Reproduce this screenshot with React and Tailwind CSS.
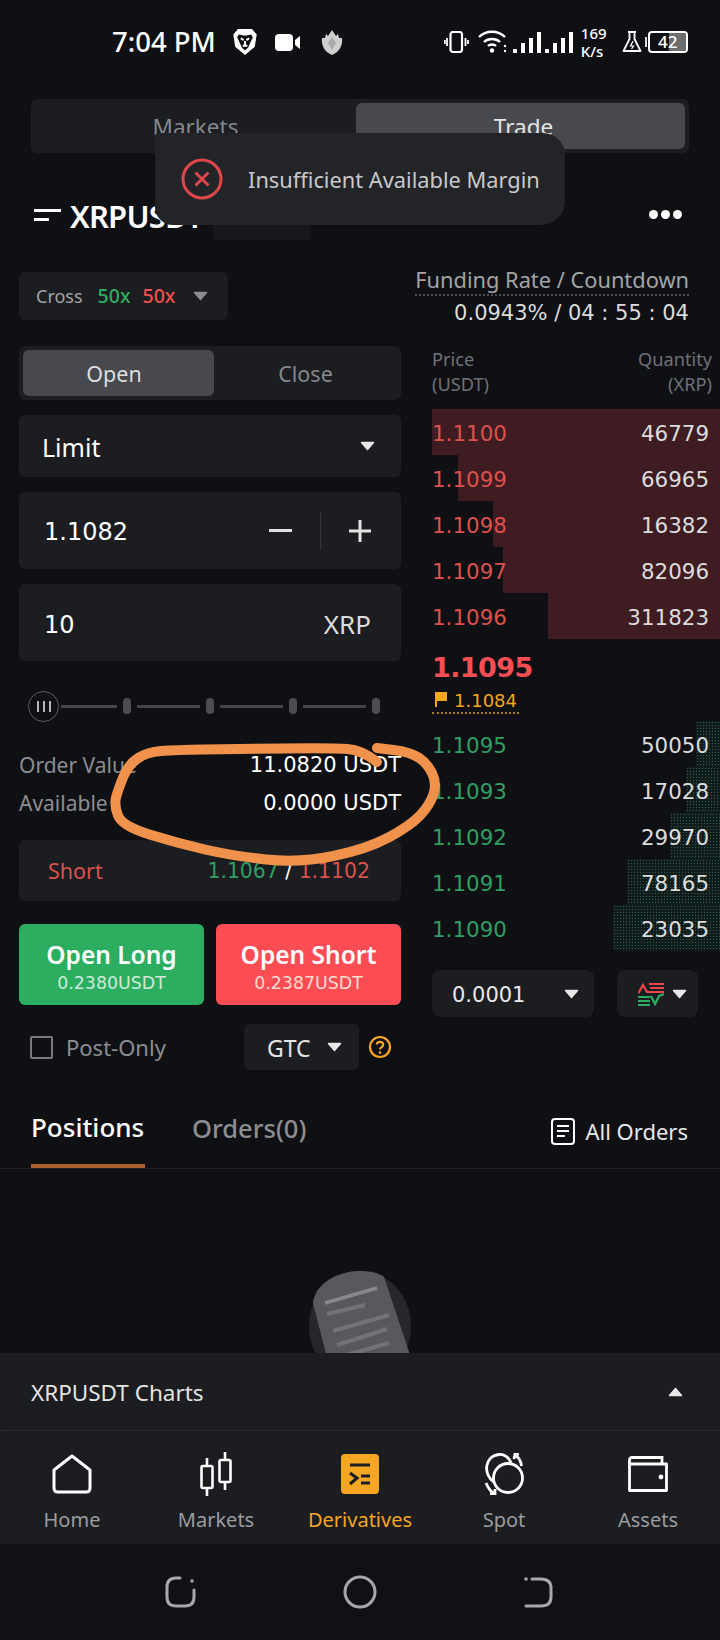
import React from "react";

const sans = "font-['Noto_Sans','Open_Sans',sans-serif]";
const num = "font-['DejaVu_Sans',sans-serif]";

const Caret = ({ className = "", up = false, color = "#e8e8e8" }) => (
  <svg width="15" height="10" viewBox="0 0 15 10" className={className}>
    <path d={up ? "M7.5 1.5 L13.5 8.5 H1.5 Z" : "M1.5 1.5 H13.5 L7.5 8.5 Z"} fill={color} stroke={color} strokeWidth="1.5" strokeLinejoin="round" />
  </svg>
);

const asks = [
  ["1.1100", "46779", 288],
  ["1.1099", "66965", 262],
  ["1.1098", "16382", 227],
  ["1.1097", "82096", 217],
  ["1.1096", "311823", 172],
];
const bids = [
  ["1.1095", "50050", 24],
  ["1.1093", "17028", 34],
  ["1.1092", "29970", 50],
  ["1.1091", "78165", 93],
  ["1.1090", "23035", 107],
];

const ringPoints = [
  [269, 22], [254, 10], [225, 8], [125, 9], [67, 10], [39, 12], [20, 25], [10, 50], [6, 65], [14, 86],
  [69, 103], [125, 116], [192, 123], [259, 109], [302, 86], [322, 65], [329, 43], [319, 23], [302, 12], [269, 8],
];
const ringPath = ringPoints.reduce((d, [x, y], i) => {
  if (i === 0) return `M${x} ${y}`;
  const next = ringPoints[i + 1];
  if (!next) return `${d} L${x} ${y}`;
  return `${d} Q${x} ${y} ${(x + next[0]) / 2} ${(y + next[1]) / 2}`;
}, "");

function BookRow({ price, qty, width, side }) {
  const red = side === "ask";
  return (
    <div className="relative flex h-[46px] items-center justify-between pr-[11px] pt-[5px]">
      <div
        className={
          red
            ? "absolute inset-y-0 right-0 bg-[#3e1c22]"
            : "absolute inset-y-0 right-0 bg-[#131c1c] bg-[radial-gradient(#28604a_0.7px,transparent_0.8px)] bg-[length:3px_3px]"
        }
        style={{ width }}
      />
      <span className={`relative ${num} text-[21.4px] ${red ? "text-[#dc514c]" : "text-[#2f9e63]"}`}>{price}</span>
      <span className={`relative ${num} text-[21.4px] text-[#dcdcdc]`}>{qty}</span>
    </div>
  );
}

function Brave() {
  return (
    <svg width="28" height="28" viewBox="0 0 27 30">
      <path d="M6 1 H21 L26 7 L24 20 L13.5 29 L3 20 L1 7 Z" fill="#fff" />
      <path d="M7 7 L12 8 H15 L20 7 L22 10 L19 16 L17 21 L13.5 24 L10 21 L8 16 L5 10 Z" fill="#101116" />
      <path d="M9 11 L12 13 M18 11 L15 13 M13.5 14 V19 M11 19 H16" stroke="#fff" strokeWidth="2" fill="none" />
    </svg>
  );
}

function StatusBar() {
  return (
    <div className="h-[99px] text-white">
      <div className="flex h-[84px] items-center">
        <span className={`ml-[112px] ${sans} text-[27.5px] font-medium whitespace-nowrap`}>7:04 PM</span>
        <div className="ml-[15px]"><Brave /></div>
        <svg width="26" height="17" viewBox="0 0 26 17" className="ml-[16px]">
          <rect x="0" y="0" width="18" height="17" rx="4" fill="#fff" />
          <path d="M20 6 L25 2 V15 L20 11 Z" fill="#fff" />
        </svg>
        <svg width="22" height="25" viewBox="0 0 22 25" className="ml-[20px]">
          <path d="M11 0 L15 6 L17 4 L18 8 L21 8 C22 16 18 22 11 25 C4 22 0 16 1 8 L4 8 L5 4 L7 6 Z" fill="#cfcfcf" />
          <path d="M11 7 L15 13 L11 20 L7 13 Z" fill="#a9a9a9" />
        </svg>
        <svg width="25" height="22" viewBox="0 0 25 22" className="ml-[101px]" fill="none" stroke="#fff">
          <rect x="6.5" y="1" width="11.5" height="20" rx="2.5" strokeWidth="2.2" />
          <path d="M3 7 V15 M0.8 9 V13 M21.5 7 V15 M24 9 V13" strokeWidth="1.8" />
        </svg>
        <svg width="30" height="24" viewBox="0 0 30 24" className="ml-[9px]" fill="none" stroke="#fff" strokeWidth="2.4">
          <path d="M1 7 C8 0 20 0 27 7" />
          <path d="M6 12 C10 8 18 8 22 12" />
          <path d="M10 16 C12 14 16 14 18 16" />
          <circle cx="14" cy="20.5" r="2.2" fill="#fff" stroke="none" />
          <circle cx="27" cy="16" r="1.2" fill="#fff" stroke="none" />
          <circle cx="27" cy="21" r="1.2" fill="#fff" stroke="none" />
        </svg>
        <div className="ml-[5px] flex h-[21px] items-end gap-[4px]">
          <span className="h-[4px] w-[4px] bg-white" />
          <span className="h-[10px] w-[4px] bg-white" />
          <span className="h-[15px] w-[4px] bg-white" />
          <span className="h-[21px] w-[4px] bg-white" />
          <span className="h-[4px] w-[4px] bg-white" />
          <span className="h-[10px] w-[4px] bg-white" />
          <span className="h-[15px] w-[4px] bg-white" />
          <span className="h-[21px] w-[4px] bg-white" />
        </div>
        <div className={`ml-[8px] flex w-[27px] flex-col ${sans} text-[15px] leading-[17px] font-medium`}>
          <span>169</span>
          <span className="mt-[1px]">K/s</span>
        </div>
        <svg width="20" height="22" viewBox="0 0 20 22" className="ml-[14px]" fill="none" stroke="#fff" strokeWidth="1.8">
          <path d="M6 1 H14 M7.5 1 V8 L1.5 20 H18.5 L12.5 8 V1" strokeLinejoin="round" />
          <path d="M11 10 L8.5 15 H11.5 L9.5 18" strokeWidth="1.2" />
        </svg>
        <span className="ml-[3px] h-[10px] w-[2px] bg-[#d8d8d8]" />
        <div className={`relative ml-[1px] flex h-[22px] w-[40px] items-center justify-center overflow-hidden rounded-[4px] border-2 border-white ${sans} text-[17px] font-medium`}>
          <span className="absolute inset-y-0 right-0 w-[17px] bg-[#6d6d6d]" />
          <span className="relative">42</span>
        </div>
      </div>
    </div>
  );
}

function Slider() {
  return (
    <div className="mt-[30px] flex h-[30px] items-center pl-[9px]">
      <div className="flex h-[31px] w-[31px] items-center justify-center gap-[4px] rounded-full border border-[#5a5c62]">
        <span className="h-[11px] w-[2px] bg-[#b5b6b9]" />
        <span className="h-[11px] w-[2px] bg-[#b5b6b9]" />
        <span className="h-[11px] w-[2px] bg-[#b5b6b9]" />
      </div>
      <span className="ml-[2px] h-[3px] w-[56px] bg-[#43454a]" />
      <span className="ml-[6px] h-[16px] w-[8px] rounded-full bg-[#4b4d52]" />
      <span className="ml-[6px] h-[3px] w-[63px] bg-[#43454a]" />
      <span className="ml-[6px] h-[16px] w-[8px] rounded-full bg-[#4b4d52]" />
      <span className="ml-[6px] h-[3px] w-[63px] bg-[#43454a]" />
      <span className="ml-[6px] h-[16px] w-[8px] rounded-full bg-[#4b4d52]" />
      <span className="ml-[6px] h-[3px] w-[63px] bg-[#43454a]" />
      <span className="ml-[6px] h-[16px] w-[8px] rounded-full bg-[#4b4d52]" />
    </div>
  );
}

function LeftColumn() {
  return (
    <div className="ml-[19px] flex w-[382px] flex-col">
      <div className="flex h-[54px] rounded-[6px] bg-[#1b1d21] p-[4px]">
        <div className={`flex h-[46px] w-[191px] items-center justify-center rounded-[6px] bg-[#47494e] pr-[9px] pt-[3px] ${sans} text-[21.5px] text-[#dedede]`}>Open</div>
        <div className={`flex h-[46px] flex-1 items-center justify-center pt-[3px] ${sans} text-[21.5px] text-[#85878b]`}>Close</div>
      </div>
      <div className="mt-[15px] flex h-[62px] items-center justify-between rounded-[6px] bg-[#1b1d21] pl-[23px] pr-[26px]">
        <span className={`pt-[4px] ${sans} text-[25px] text-white`}>Limit</span>
        <Caret />
      </div>
      <div className="mt-[15px] flex h-[77px] items-center rounded-[6px] bg-[#1b1d21] pl-[25px]">
        <span className={`pt-[2px] ${num} text-[24px] text-white`}>1.1082</span>
        <div className="ml-auto mr-[29px] flex items-center">
          <span className="h-[3px] w-[23px] bg-[#e0e0e0]" />
          <span className="ml-[28px] h-[38px] w-px bg-[#36383d]" />
          <svg width="24" height="24" viewBox="0 0 24 24" className="ml-[27px]"><path d="M12 1 V23 M1 12 H23" stroke="#e4e4e4" strokeWidth="3" /></svg>
        </div>
      </div>
      <div className="mt-[15px] flex h-[77px] items-center justify-between rounded-[6px] bg-[#1b1d21] pl-[25px] pr-[30px]">
        <span className={`pt-[4px] ${num} text-[24px] text-white`}>10</span>
        <span className={`pt-[4px] ${sans} text-[26px] text-[#dcdcdc]`}>XRP</span>
      </div>
      <Slider />
      <div className={`mt-[25px] flex h-[38px] items-center justify-between pt-[2px] ${sans} text-[21px] text-[#8b8d91]`}>
        <span>Order Value</span>
        <span className={`${num} text-[21px] text-white`}>11.0820 USDT</span>
      </div>
      <div className={`flex h-[38px] items-center justify-between pt-[2px] ${sans} text-[21px] text-[#8b8d91]`}>
        <span>Available</span>
        <span className={`${num} text-[21px] text-white`}>0.0000 USDT</span>
      </div>
      <div className="mt-[18px] flex h-[61px] items-center justify-between rounded-[6px] bg-[#1b1d21] pl-[29px] pr-[31px] pt-[2px]">
        <span className={`${sans} text-[21.5px] text-[#dc514c]`}>Short</span>
        <span className={`${num} text-[20.4px]`}>
          <span className="text-[#2f9e63]">1.1067</span>
          <span className="text-white"> / </span>
          <span className="text-[#dc514c]">1.1102</span>
        </span>
      </div>
      <div className="mt-[23px] flex h-[81px] gap-[12px]">
        <div className="flex flex-1 flex-col items-center justify-center rounded-[6px] bg-[#2bae5f] pt-[2px]">
          <span className={`${sans} text-[24.5px] leading-[34px] font-semibold text-white`}>Open Long</span>
          <span className={`${num} text-[17.4px] leading-[22px] text-[#cdeadb]`}>0.2380USDT</span>
        </div>
        <div className="flex flex-1 flex-col items-center justify-center rounded-[6px] bg-[#fc4c54] pt-[2px]">
          <span className={`${sans} text-[24.5px] leading-[34px] font-semibold text-white`}>Open Short</span>
          <span className={`${num} text-[17.4px] leading-[22px] text-[#ffdcd0]`}>0.2387USDT</span>
        </div>
      </div>
      <div className="mt-[19px] flex h-[46px] items-center">
        <span className="ml-[11px] h-[23px] w-[23px] rounded-[2px] border-2 border-[#77797d]" />
        <span className={`ml-[13px] w-[106px] ${sans} text-[22px] text-[#8b8d91]`}>Post-Only</span>
        <div className="ml-[72px] flex h-[46px] w-[115px] items-center rounded-[6px] bg-[#1b1d21] pl-[23px]">
          <span className={`pt-[3px] ${sans} text-[23px] text-[#e4e4e4]`}>GTC</span>
          <Caret className="ml-[16px]" />
        </div>
        <svg width="24" height="24" viewBox="0 0 24 24" className="ml-[9px]" fill="none" stroke="#f5a623" strokeWidth="2.2">
          <circle cx="12" cy="12" r="10" />
          <path d="M8.8 9.5 C9 6 15 6 15.2 9.5 C15.3 12 12 12 12 14.5" />
          <circle cx="12" cy="17.6" r="1.3" fill="#f5a623" stroke="none" />
        </svg>
      </div>
    </div>
  );
}

function RightColumn() {
  return (
    <div className="ml-[31px] flex w-[288px] flex-col">
      <div className={`flex h-[63px] justify-between pt-[1px] pr-[8px] ${sans} text-[18.2px] leading-[25px] text-[#6f7176]`}>
        <div className="flex flex-col"><span>Price</span><span>(USDT)</span></div>
        <div className="flex flex-col items-end"><span>Quantity</span><span>(XRP)</span></div>
      </div>
      {asks.map(([p, q, w]) => <BookRow key={p} price={p} qty={q} width={w} side="ask" />)}
      <div className="flex h-[82px] flex-col">
        <span className={`mt-[11px] ${num} text-[27px] leading-[36px] font-bold tracking-[-0.6px] text-[#f64e53]`}>1.1095</span>
        <div className="flex h-[28px] w-[87px] items-center border-b-2 border-dotted border-[#b27a24]">
          <svg width="12" height="15" viewBox="0 0 12 15" className="ml-[3px]">
            <path d="M0 0 H12 V9 H2 V15 H0 Z" fill="#f5a623" />
          </svg>
          <span className={`ml-[7px] pt-[3px] ${num} text-[18px] whitespace-nowrap text-[#f5a623]`}>1.1084</span>
        </div>
      </div>
      {bids.map(([p, q, w]) => <BookRow key={p} price={p} qty={q} width={w} side="bid" />)}
      <div className="mt-[19px] flex h-[47px]">
        <div className="flex w-[162px] items-center justify-between rounded-[8px] bg-[#1b1d21] pl-[20px] pr-[15px]">
          <span className={`pt-[5px] ${num} text-[21px] text-[#e8e8e8]`}>0.0001</span>
          <Caret />
        </div>
        <div className="ml-[23px] flex w-[81px] items-center rounded-[8px] bg-[#1b1d21] pl-[21px]">
          <svg width="26" height="24" viewBox="0 0 26 24" fill="none" strokeWidth="2.2">
            <path d="M0.5 11 L5 3 L9 10 L26 10 M11 2 H26 M12 6 H26" stroke="#e8474c" />
            <path d="M0 15 H12 M0 19 H12 M0 23 H12 M13 14 L17 22 L21 14 L26 12" stroke="#2bae5f" />
          </svg>
          <Caret className="ml-[8px]" />
        </div>
      </div>
    </div>
  );
}

function Tabs() {
  return (
    <div className="flex h-[99px] items-end justify-between border-b border-[#1f2125] pl-[31px] pr-[32px]">
      <div className="flex items-end">
        <div className="flex h-[95px] w-[114px] flex-col border-b-4 border-[#ad6030]">
          <span className={`mt-[37px] ${sans} text-[26px] leading-[34px] font-medium whitespace-nowrap text-white`}>Positions</span>
        </div>
        <span className={`ml-[47px] mb-[21px] ${sans} text-[25.5px] leading-[38px] font-medium text-[#8b8d91]`}>Orders(0)</span>
      </div>
      <div className="mb-[23px] flex items-center">
        <svg width="24" height="27" viewBox="0 0 24 27" fill="none" stroke="#fff" strokeWidth="2">
          <rect x="1" y="1" width="22" height="25" rx="3" />
          <path d="M6 8 H18 M6 13 H18 M6 18 H14" />
        </svg>
        <span className={`ml-[10px] ${sans} text-[22px] leading-[28px] text-[#e8e8e8]`}>All Orders</span>
      </div>
    </div>
  );
}

function EmptyState() {
  return (
    <div className="flex flex-1 justify-center overflow-hidden pt-[102px]">
      <svg width="102" height="110" viewBox="0 0 102 110" className="shrink-0">
        <ellipse cx="51" cy="55" rx="51" ry="55" fill="#26272b" />
        <path d="M4 32 C6 12 30 0 50 0 C62 0 70 2 75 6 L101 84 V110 H24 Z" fill="#58595e" />
        <path d="M16 32 L68 17" stroke="#87888c" strokeWidth="3.5" fill="none" />
        <path d="M18 43 L56 34 M24 60 L80 44 M28 74 L78 58 M38 84 L80 72" stroke="#727377" strokeWidth="4" fill="none" />
      </svg>
    </div>
  );
}

function NavItem({ label, active, children }) {
  return (
    <div className="flex w-[144px] flex-col items-center">
      <div className="flex h-[45px] items-center justify-center">{children}</div>
      <span className={`mt-[10px] ${sans} text-[20px] leading-[28px] ${active ? "text-[#f5a623]" : "text-[#9a9ca0]"}`}>{label}</span>
    </div>
  );
}

function BottomPanel() {
  return (
    <div className="flex flex-col">
      <div className="flex h-[78px] items-center justify-between border-b border-dotted border-[#36383d] bg-[#1b1d21] pl-[31px] pr-[37px]">
        <span className={`pt-[2px] ${sans} text-[22.5px] text-[#e4e4e4]`}>XRPUSDT Charts</span>
        <Caret up />
      </div>
      <div className="flex h-[113px] bg-[#1b1d21] pt-[20px]">
        <NavItem label="Home">
          <svg width="40" height="40" viewBox="0 0 40 40" fill="none" stroke="#fff" strokeWidth="3" strokeLinejoin="round">
            <path d="M20 2 L38 16 V34 Q38 38 34 38 H6 Q2 38 2 34 V16 Z" />
          </svg>
        </NavItem>
        <NavItem label="Markets">
          <svg width="32" height="44" viewBox="0 0 32 44" fill="none" stroke="#fff" strokeWidth="2.6">
            <rect x="1.5" y="14" width="11" height="22" rx="1.5" />
            <rect x="19.5" y="8" width="11" height="22" rx="1.5" />
            <path d="M7 6 V14 M7 36 V44 M25 0 V8 M25 30 V38" />
          </svg>
        </NavItem>
        <NavItem label="Derivatives" active>
          <svg width="38" height="40" viewBox="0 0 38 40">
            <rect width="38" height="40" rx="4" fill="#f5a623" />
            <path d="M9 11 H29 M9 19 L16 24 L9 30 M20 22 H29 M20 29 H29" stroke="#1c1e22" strokeWidth="3" fill="none" />
          </svg>
        </NavItem>
        <NavItem label="Spot">
          <svg width="42" height="42" viewBox="0 0 42 42" fill="none" stroke="#fff" strokeWidth="2.8">
            <circle cx="25" cy="25" r="14.5" />
            <path d="M11 29 C0 22 1 3 16 1.5 C21 1 26 4 28 10" />
            <path d="M31 1 C36 4 38 8 38.5 13 M31 6 L32 1 L36 1" />
            <path d="M3 30 C5 35 8 39 12 41 M7 41 L12 41 L12 36" />
          </svg>
        </NavItem>
        <NavItem label="Assets">
          <svg width="40" height="36" viewBox="0 0 40 36" fill="none" stroke="#fff" strokeWidth="2.8">
            <path d="M1.5 8 V4 Q1.5 1.5 4 1.5 H34 V8" />
            <path d="M1.5 8 H38.5 V34.5 H1.5 Z" strokeLinejoin="round" />
            <circle cx="33" cy="21" r="2.4" fill="#fff" stroke="none" />
          </svg>
        </NavItem>
      </div>
      <div className="flex h-[96px] items-start justify-center gap-[146px] bg-[#101114] pt-[31px] pr-[2px]">
        <svg width="33" height="34" viewBox="0 0 33 34" fill="none" stroke="#a8a8aa" strokeWidth="3" strokeLinecap="round">
          <path d="M16 3 H12 Q3 3 3 12 V22 Q3 31 12 31 H21 Q30 31 30 22 V15" />
          <circle cx="28" cy="6" r="1.8" fill="#a8a8aa" stroke="none" />
        </svg>
        <svg width="34" height="34" viewBox="0 0 34 34" fill="none" stroke="#a8a8aa" strokeWidth="3">
          <circle cx="17" cy="17" r="15" />
        </svg>
        <svg width="31" height="34" viewBox="0 0 31 34" fill="none" stroke="#a8a8aa" strokeWidth="3" strokeLinecap="round">
          <path d="M9 4 H18 Q28 4 28 13 V22 Q28 31 18 31 H3" />
          <circle cx="3" cy="4" r="1.8" fill="#a8a8aa" stroke="none" />
        </svg>
      </div>
    </div>
  );
}

export default function App() {
  return (
    <div className="relative flex h-[1640px] w-[720px] flex-col overflow-hidden bg-[#0f1014]">
      <StatusBar />
      <div className="ml-[31px] flex h-[54px] w-[658px] rounded-[6px] bg-[#1b1d21] p-[4px]">
        <div className={`flex flex-1 items-center justify-center pt-[2px] ${sans} text-[22.5px] text-[#85878b]`}>Markets</div>
        <div className={`flex h-[46px] w-[329px] items-center justify-center rounded-[6px] bg-[#47494e] pl-[6px] pt-[2px] ${sans} text-[22.5px] text-[#e4e4e4]`}>Trade</div>
      </div>
      <div className="mt-[40px] flex h-[44px] items-center justify-between pl-[34px] pr-[38px]">
        <div className="flex items-center">
          <div className="flex w-[27px] flex-col gap-[6px]">
            <span className="h-[3px] w-[27px] bg-white" />
            <span className="h-[3px] w-[15px] bg-white" />
          </div>
          <span className={`ml-[9px] pt-[2px] ${sans} text-[31px] leading-[44px] font-semibold tracking-[-0.8px] text-white`}>XRPUSDT</span>
        </div>
        <div className="mb-[2px] flex gap-[3px]">
          <span className="h-[9px] w-[9px] rounded-full bg-white" />
          <span className="h-[9px] w-[9px] rounded-full bg-white" />
          <span className="h-[9px] w-[9px] rounded-full bg-white" />
        </div>
      </div>
      <div className="flex h-[109px] items-start justify-between pl-[19px] pr-[31px] pt-[35px]">
        <div className={`flex h-[48px] w-[209px] items-center rounded-[6px] bg-[#1b1d21] pl-[17px] ${sans} text-[18px]`}>
          <span className="text-[#a2a4a8]">Cross</span>
          <span className="ml-[15px] text-[19.5px] font-medium text-[#2bae5f]">50x</span>
          <span className="ml-[12px] text-[19.5px] font-medium text-[#f0504f]">50x</span>
          <Caret className="ml-[18px]" color="#8b8d91" />
        </div>
        <div className="mt-[-6px] flex flex-col items-end">
          <span className={`border-b-2 border-dotted border-[#4c4e53] ${sans} text-[21.8px] leading-[28px] text-[#a2a4a8]`}>Funding Rate / Countdown</span>
          <span className={`mt-[3px] ${num} text-[21px] leading-[28px] text-[#dcdcdc]`}>0.0943% / 04 : 55 : 04</span>
        </div>
      </div>
      <div className="flex">
        <LeftColumn />
        <RightColumn />
      </div>
      <Tabs />
      <EmptyState />
      <BottomPanel />

      <div className="absolute left-[213px] top-[225px] h-[15px] w-[98px] rounded-b-[4px] bg-[#17181c]" />
      <div className="absolute left-[155px] top-[133px] flex h-[92px] w-[410px] items-center rounded-tl-[4px] rounded-tr-[22px] rounded-br-[24px] rounded-bl-[18px] bg-[#232427]">
        <svg width="42" height="42" viewBox="0 0 42 42" className="ml-[26px] shrink-0" fill="none" stroke="#e0474a" strokeWidth="3">
          <circle cx="21" cy="21" r="19" />
          <path d="M14.5 14.5 L27.5 27.5 M27.5 14.5 L14.5 27.5" />
        </svg>
        <span className={`ml-[25px] pt-[2px] ${sans} text-[21.8px] whitespace-nowrap text-[#c8c9cc]`}>Insufficient Available Margin</span>
      </div>

      <svg width="340" height="130" viewBox="0 0 340 130" className="absolute left-[108px] top-[740px]" fill="none">
        <path d={ringPath} stroke="#f0914c" strokeWidth="10" strokeLinecap="round" strokeLinejoin="round" />
      </svg>
    </div>
  );
}
